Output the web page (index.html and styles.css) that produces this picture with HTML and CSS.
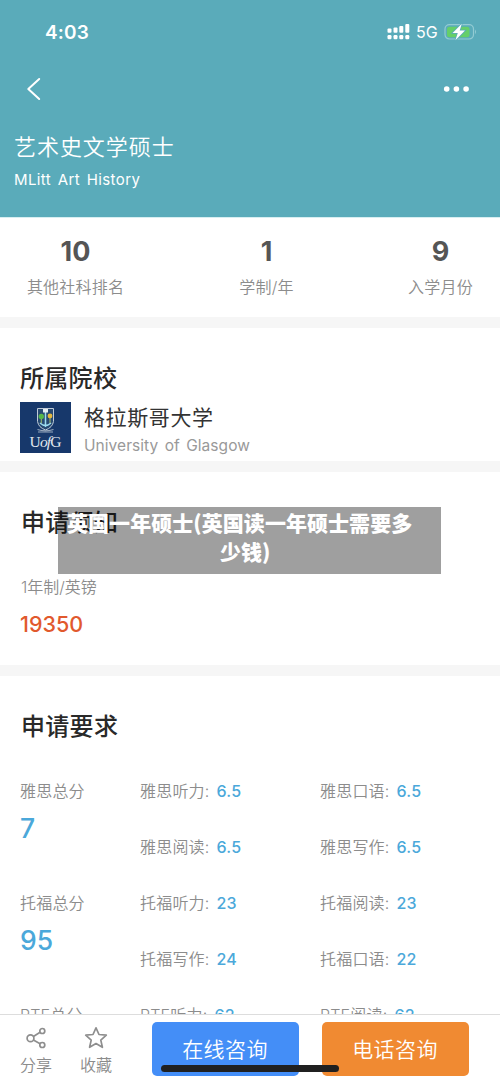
FILE: index.html
```html
<!DOCTYPE html>
<html lang="zh-CN">
<head>
<meta charset="utf-8">
<title>艺术史文学硕士</title>
<link rel="stylesheet" href="styles.css">
</head>
<body>
<div class="screen">
  <header class="hero">
    <div class="status">
      <span class="time">4:03</span>
      <div class="status-icons">
        <svg class="signal" width="24" height="18" viewBox="0 0 24 18" fill="#fff">
          <rect x="0.5" y="5.5" width="4" height="4.2" rx="1"/><rect x="6.5" y="4.5" width="4" height="5.2" rx="1"/><rect x="12.3" y="3" width="4" height="6.7" rx="1"/><rect x="18.3" y="1" width="4" height="8.7" rx="1"/>
          <rect x="0.5" y="12" width="4" height="4.3" rx="1.2"/><rect x="6.5" y="12" width="4" height="4.3" rx="1.2"/><rect x="12.3" y="12" width="4" height="4.3" rx="1.2"/><rect x="18.3" y="12" width="4" height="4.3" rx="1.2"/>
        </svg>
        <span class="network">5G</span>
        <svg class="battery" width="34" height="18" viewBox="0 0 34 18">
          <rect x="1" y="1.7" width="28.5" height="14.3" rx="4.4" fill="none" stroke="#93cbd3" stroke-width="1.2"/>
          <path d="M31 6.5q2 2.3 0 4.7z" fill="#93cbd3"/>
          <rect x="3" y="3.7" width="22.5" height="10.5" rx="2.5" fill="#65cf69"/>
          <path d="M17.8 0.8 8.600 10h5.200L11.400 17.200 21 7.600h-5.300z" fill="#fff" stroke="#5aabba" stroke-width="1.600" paint-order="stroke"/>
        </svg>
      </div>
    </div>
    <nav class="nav">
      <svg width="16" height="24" viewBox="0 0 16 24" fill="none" stroke="#fff" stroke-width="2" stroke-linecap="round" stroke-linejoin="round"><path d="M13.2 2 2.3 12l10.9 10"/></svg>
      <svg width="28" height="8" viewBox="0 0 28 8" fill="#fff"><circle cx="3.7" cy="4" r="2.8"/><circle cx="13.4" cy="4" r="2.8"/><circle cx="23.1" cy="4" r="2.8"/></svg>
    </nav>
    <h1 class="title">艺术史文学硕士</h1>
    <p class="subtitle">MLitt Art History</p>
  </header>

  <section class="stats">
    <div class="stat stat-rank"><b>10</b><span>其他社科排名</span></div>
    <div class="stat stat-length"><b>1</b><span>学制/年</span></div>
    <div class="stat stat-month"><b>9</b><span>入学月份</span></div>
  </section>

  <section class="school">
    <h2>所属院校</h2>
    <div class="school-row">
      <svg class="crest" width="51" height="51" viewBox="0 0 51 51">
        <rect width="51" height="51" fill="#17386b"/>
        <path d="M17.5 6.5h16v13q-1 6-8 8.500-7-2.500-8-8.500z" fill="#284a72" stroke="#c0cbd8" stroke-width="1"/>
        <path d="M25.500 9v16M20 21q5.500 5 11 0" fill="none" stroke="#9ddcf0" stroke-width="1.500"/>
        <path d="M23 7h5v3.500h-5z" fill="#e4edf3"/>
        <circle cx="21.300" cy="14.500" r="2.700" fill="#55b649"/><circle cx="30" cy="14" r="2.400" fill="#e5b83e"/>
        <path d="M21.300 17v4M30 16v5" stroke="#a1b96d"/>
        <path d="M17.500 27.500q8 2.500 16 0M18 30h15" fill="none" stroke="#99a9bd" stroke-width="1.200"/>
        <text class="crest-text" x="9.500" y="45" textLength="32">U<tspan font-style="italic">of</tspan>G</text>
      </svg>
      <div class="school-name"><strong>格拉斯哥大学</strong><span>University of Glasgow</span></div>
    </div>
  </section>

  <section class="notice">
    <h2>申请须知</h2>
    <p class="fee-label">1年制/英镑</p>
    <p class="fee">19350</p>
    <div class="caption"><p class="caption-first">英国一年硕士(英国读一年硕士需要多</p><p class="caption-second">少钱)</p></div>
  </section>

  <section class="requirements">
    <h2>申请要求</h2>
    <div class="scores">
      <div class="total"><span>雅思总分</span><b>7</b></div>
      <p>雅思听力:<b>6.5</b></p><p>雅思口语:<b>6.5</b></p>
      <p>雅思阅读:<b>6.5</b></p><p>雅思写作:<b>6.5</b></p>
      <div class="total"><span>托福总分</span><b>95</b></div>
      <p>托福听力:<b>23</b></p><p>托福阅读:<b>23</b></p>
      <p>托福写作:<b>24</b></p><p>托福口语:<b>22</b></p>
      <div class="total"><span>PTE总分</span></div>
      <p>PTE听力:<b>62</b></p><p>PTE阅读:<b>62</b></p>
    </div>
  </section>

  <footer class="toolbar">
    <div class="action">
      <svg width="24" height="24" viewBox="0 0 24 24" fill="none" stroke="#8e8e8e" stroke-width="1.700"><circle cx="6.500" cy="12.300" r="3.400"/><circle cx="18.300" cy="5" r="2.500"/><circle cx="18.300" cy="19" r="2.500"/><path d="m9.400 10.500 6.700-4.200M9.400 14.100l6.700 3.700"/></svg>
      <span>分享</span>
    </div>
    <div class="action">
      <svg width="24" height="24" viewBox="0 0 24 24" fill="none" stroke="#8e8e8e" stroke-width="1.700" stroke-linejoin="round"><path d="m12 1.800 3 6.700 7.300.7-5.500 4.900 1.600 7.200-6.400-3.800-6.400 3.800 1.600-7.200L1.700 9.200 9 8.500z"/></svg>
      <span>收藏</span>
    </div>
    <button class="online">在线咨询</button>
    <button class="phone">电话咨询</button>
    <div class="home-indicator"></div>
  </footer>
</div>
</body>
</html>
```
FILE: styles.css
```css
* { box-sizing: border-box; }
body { margin: 0; font-family: Inter, "Noto Sans CJK SC", sans-serif; background: #fff; color: #999; }
h1, h2, p { margin: 0; }
.screen { width: 500px; height: 1082px; overflow: hidden; display: flex; flex-direction: column; position: relative; }
.screen > section, .hero { flex: none; }
.hero { height: 217px; background: #5aabba; color: #fff; }
.status { height: 64px; padding: 0 22px 0 45px; display: flex; align-items: center; justify-content: space-between; }
.time { font-size: 19px; font-weight: 600; letter-spacing: .2px; }
.status-icons { display: flex; align-items: center; }
.network { font-size: 16px; width: 28px; margin-left: 5px; }
.nav { height: 50px; padding: 0 29px 0 26px; display: flex; align-items: center; justify-content: space-between; }
.title { padding: 17px 14px 0; font-size: 22px; line-height: 32px; font-weight: 350; letter-spacing: .95px; }
.subtitle { padding: 5px 14px 0; font-size: 15px; line-height: 24px; letter-spacing: .4px; word-spacing: 2px; }

.stats { height: 111px; display: grid; grid-template-columns: 151px 231px 117px; border-top: 1px solid #d7eef1; border-bottom: 11px solid #f6f6f6; }
.stat { padding-top: 16px; display: flex; flex-direction: column; align-items: center; }
.stat b { font-size: 27px; line-height: 36px; font-weight: 700; color: #555; }
.stat span { margin-top: 5px; font-size: 16px; line-height: 24px; font-weight: 350; letter-spacing: .2px; color: #8c8c8c; }

h2 { font-size: 24px; line-height: 36px; font-weight: 500; letter-spacing: .3px; color: #292929; }
.school { height: 144px; padding: 33px 20px 0; border-bottom: 11px solid #f6f6f6; }
.school-row { display: flex; gap: 13px; margin-top: 5px; }
.crest { flex: none; }
.crest-text { font: 15.5px "Liberation Serif", serif; fill: #e3e9ef; }
.school-name { display: flex; flex-direction: column; padding-top: 1px; }
.school-name strong { font-size: 21px; line-height: 30px; font-weight: 400; letter-spacing: .6px; color: #333; }
.school-name span { font-size: 15.500px; line-height: 24px; margin-top: 1px; letter-spacing: .05px; word-spacing: 2px; color: #999; }

.notice { height: 204px; padding: 33px 21px 0; border-bottom: 11px solid #f6f6f6; position: relative; }
.fee-label { margin-top: 34px; font-size: 16px; line-height: 24px; font-weight: 350; color: #8c8c8c; }
.fee { margin-top: 10px; margin-left: -1px; font-size: 21.5px; line-height: 30px; font-weight: 500; color: #e1592d; }
.caption { position: absolute; left: 58px; top: 35px; width: 383px; height: 67px; background: rgba(0, 0, 0, .375); color: #fff; font-family: "Noto Sans CJK SC", sans-serif; font-size: 21px; line-height: 28px; font-weight: 900; letter-spacing: .05px; white-space: nowrap; }
.caption-first { padding: 1px 0 0 9px; }
.caption-second { padding: 1px 0 0 162px; }

.requirements { padding: 33px 20px 0; }
.requirements h2 { padding-left: 1px; }
.scores { margin-top: 34px; display: grid; grid-template-columns: 120px 180px 180px; grid-auto-rows: 56px; font-size: 16px; line-height: 24px; font-weight: 350; letter-spacing: .2px; color: #8c8c8c; }
.scores p b { margin-left: 7px; font-size: 16px; font-weight: 500; color: #4ba8da; letter-spacing: .2px; }
.total { grid-row: span 2; display: flex; flex-direction: column; }
.total b { margin-top: 8px; font-size: 26.5px; line-height: 34px; font-weight: 500; color: #4ba8da; letter-spacing: 0; }

.toolbar { position: absolute; left: 0; right: 0; bottom: 0; height: 68px; padding: 7px 32px 6px 6px; display: grid; grid-template-columns: 60px 60px 147px 147px; column-gap: 0; background: #fff; border-top: 1px solid #ddd; }
.action { display: flex; flex-direction: column; align-items: center; padding-top: 4px; }
.action span { font-size: 16px; line-height: 24px; margin-top: 3px; font-weight: 350; color: #8c8c8c; }
.toolbar button { width: 147px; height: 54px; padding: 1px 0 0; border: 0; border-radius: 5px; color: #fff; font: 350 21px/53px Inter, "Noto Sans CJK SC", sans-serif; letter-spacing: .4px; }
.online { background: #448ef7; margin-left: 25.500px; }
.phone { background: #f08a32; margin-left: 48.500px; }
.home-indicator { position: absolute; left: 161px; top: 50px; width: 178px; height: 7px; border-radius: 4px; background: #202020; }
```
